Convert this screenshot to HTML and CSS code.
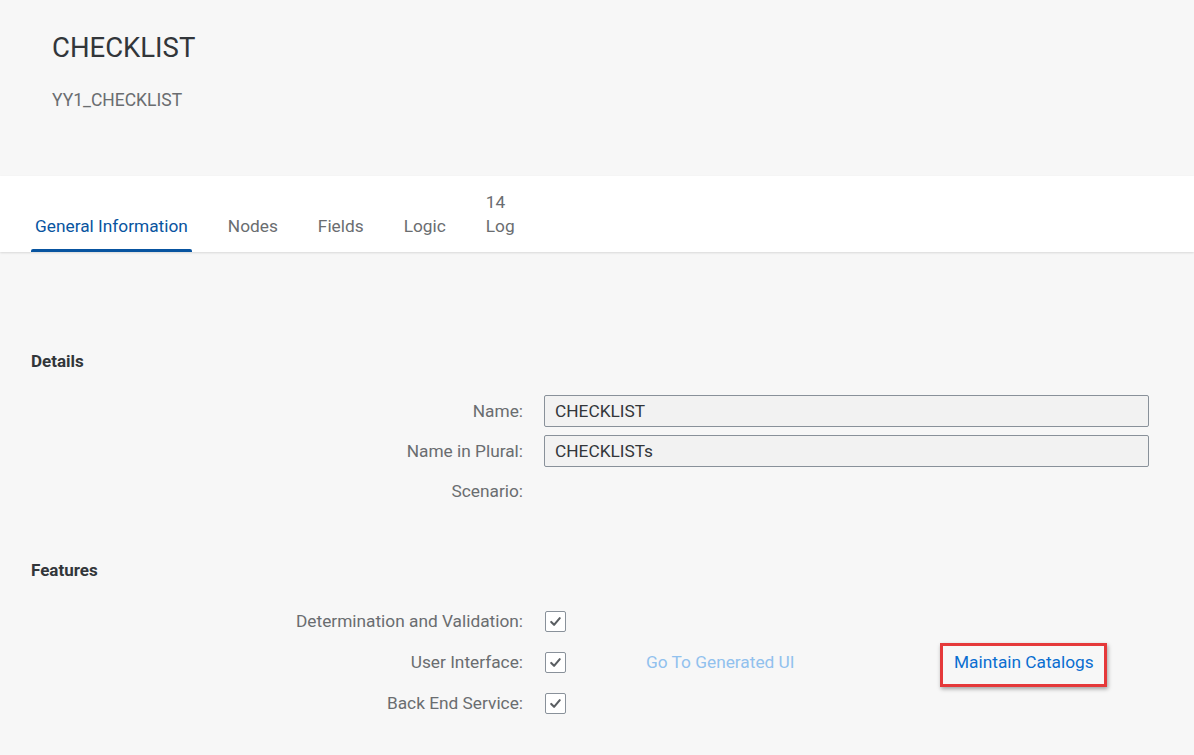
FILE: index.html
```html
<!DOCTYPE html>
<html>
<head>
<meta charset="utf-8">
<link rel="stylesheet" href="styles.css">
</head>
<body>
<header class="head">
  <h1 class="title">CHECKLIST</h1>
  <div class="subtitle">YY1_CHECKLIST</div>
</header>
<nav class="tabs">
  <div class="tab active"><span class="count"></span><span class="label">General Information</span></div>
  <div class="tab"><span class="count"></span><span class="label">Nodes</span></div>
  <div class="tab"><span class="count"></span><span class="label">Fields</span></div>
  <div class="tab"><span class="count"></span><span class="label">Logic</span></div>
  <div class="tab"><span class="count">14</span><span class="label">Log</span></div>
</nav>
<main class="content">
  <section class="section details">
    <h2 class="sec-title">Details</h2>
    <div class="form">
      <label class="lbl">Name:</label>
      <div class="input">CHECKLIST</div>
      <label class="lbl">Name in Plural:</label>
      <div class="input">CHECKLISTs</div>
      <label class="lbl">Scenario:</label>
      <div class="empty"></div>
    </div>
  </section>
  <section class="section features">
    <h2 class="sec-title">Features</h2>
    <div class="fgrid">
      <label class="lbl">Determination and Validation:</label>
      <span class="cb"><svg viewBox="0 0 20 20" width="20" height="20"><path d="M5.5 10.5 L8.5 13.5 L14.5 6.5" fill="none" stroke="#5a5e62" stroke-width="2.2" stroke-linecap="round" stroke-linejoin="round"/></svg></span>
      <span></span><span></span>
      <label class="lbl">User Interface:</label>
      <span class="cb"><svg viewBox="0 0 20 20" width="20" height="20"><path d="M5.5 10.5 L8.5 13.5 L14.5 6.5" fill="none" stroke="#5a5e62" stroke-width="2.2" stroke-linecap="round" stroke-linejoin="round"/></svg></span>
      <a class="link disabled">Go To Generated UI</a>
      <span class="mark"><a class="link">Maintain Catalogs</a></span>
      <label class="lbl">Back End Service:</label>
      <span class="cb"><svg viewBox="0 0 20 20" width="20" height="20"><path d="M5.5 10.5 L8.5 13.5 L14.5 6.5" fill="none" stroke="#5a5e62" stroke-width="2.2" stroke-linecap="round" stroke-linejoin="round"/></svg></span>
      <span></span><span></span>
    </div>
  </section>
</main>
</body>
</html>
```

FILE: styles.css
```css
* { box-sizing: border-box; }
html, body { margin: 0; padding: 0; }
body {
  background: #f7f7f7;
  font-family: Roboto, "Liberation Sans", sans-serif;
  color: #32363a;
  width: 1194px;
  height: 755px;
  overflow: hidden;
}
.head {
  height: 176px;
  padding: 33px 0 0 52px;
  background: #f7f7f7;
}
.title {
  margin: 0;
  font-size: 27.5px;
  font-weight: 400;
  line-height: 30px;
  color: #32363a;
}
.subtitle {
  margin-top: 27px;
  font-size: 17.5px;
  line-height: 20px;
  color: #6a6d70;
}
.tabs {
  height: 76px;
  background: #fff;
  display: flex;
  padding-left: 31px;
  box-shadow: 0 1px 2px rgba(0,0,0,0.12);
  position: relative;
}
.tab {
  position: relative;
  display: flex;
  flex-direction: column;
  justify-content: flex-end;
  padding: 0 4px 15px;
  margin-right: 32px;
  font-size: 17.3px;
  color: #6a6d70;
}
.tab .count { line-height: 22px; height: 22px; }
.tab .label { line-height: 22px; margin-top: 2px; }
.tab.active { color: #0854a0; }
.tab.active::after {
  content: "";
  position: absolute;
  left: 0;
  right: 0;
  bottom: 0;
  height: 3px;
  background: #0854a0;
  border-radius: 2px 2px 0 0;
}
.content {
  padding: 99px 0 0 31px;
}
.sec-title {
  margin: 0;
  font-size: 17px;
  font-weight: 700;
  line-height: 20px;
  color: #32363a;
}
.form {
  margin-top: 24px;
  display: grid;
  grid-template-columns: 492px 605px;
  column-gap: 21px;
  row-gap: 8px;
  align-items: center;
}
.lbl {
  text-align: right;
  font-size: 17.3px;
  color: #6a6d70;
  line-height: 32px;
}
.input {
  height: 32px;
  border: 1px solid #89919a;
  border-radius: 2px;
  background: #f2f2f2;
  padding: 0 10px;
  font-size: 17.3px;
  line-height: 30px;
  color: #32363a;
}
.empty { height: 32px; }
.features { margin-top: 53px; }
.fgrid {
  margin-top: 25px;
  display: grid;
  grid-template-columns: 513px 102px 294px auto;
  column-gap: 0;
  row-gap: 9px;
  align-items: center;
}
.fgrid .lbl { padding-right: 21px; }
.cb {
  width: 21px;
  height: 21px;
  border: 1px solid #89919a;
  border-radius: 2px;
  background: #fff;
  display: flex;
  align-items: center;
  justify-content: center;
  margin-left: 1px;
}
.cb svg { width: 19px; height: 19px; }
.link {
  font-size: 17.3px;
  color: #0a6ed1;
  line-height: 32px;
}
.link.disabled { color: #91c1ee; }
.mark {
  justify-self: start;
  align-self: start;
  border: 3px solid #e5393a;
  box-shadow: 1px 2px 4px rgba(0,0,0,0.35);
  padding: 0 10px 6px 11px;
  margin: -3px 0 -9px 0;
  line-height: 32px;
}
.mark .link { display: block; line-height: 32px; }
```
